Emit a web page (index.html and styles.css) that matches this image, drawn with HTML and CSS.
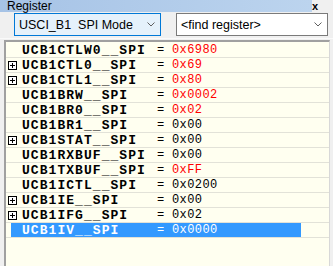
FILE: index.html
```html
<!DOCTYPE html>
<html lang="en">
<head>
<meta charset="UTF-8">
<meta name="viewport" content="width=device-width, initial-scale=1.0">
<title>Register</title>
<link rel="stylesheet" href="styles.css">
</head>
<body>

<div class="window">
  <div class="titlebar">
    <div class="title">Register</div>
    <div class="close">x</div>
  </div>

  <div class="toolbar">
    <div class="combo active">
      <span>USCI_B1&nbsp; SPI Mode</span>
      <svg class="chevron" width="8" height="5" viewBox="0 0 8 5"><path d="M0.5 0.5 L4 4 L7.5 0.5" fill="none" stroke="#5f5f5f" stroke-width="1"/></svg>
    </div>
    <div class="combo">
      <span>&lt;find register&gt;</span>
      <svg class="chevron" width="8" height="5" viewBox="0 0 8 5"><path d="M0.5 0.5 L4 4 L7.5 0.5" fill="none" stroke="#5f5f5f" stroke-width="1"/></svg>
    </div>
  </div>

  <div class="list">
    <div class="row"><span class="exp"></span><span class="name">UCB1CTLW0__SPI</span><span class="eq">=</span><span class="val changed">0x6980</span></div>
    <div class="row"><span class="exp"><i class="box"></i></span><span class="name">UCB1CTL0__SPI</span><span class="eq">=</span><span class="val changed">0x69</span></div>
    <div class="row"><span class="exp"><i class="box"></i></span><span class="name">UCB1CTL1__SPI</span><span class="eq">=</span><span class="val changed">0x80</span></div>
    <div class="row"><span class="exp"></span><span class="name">UCB1BRW__SPI</span><span class="eq">=</span><span class="val changed">0x0002</span></div>
    <div class="row"><span class="exp"></span><span class="name">UCB1BR0__SPI</span><span class="eq">=</span><span class="val changed">0x02</span></div>
    <div class="row"><span class="exp"></span><span class="name">UCB1BR1__SPI</span><span class="eq">=</span><span class="val">0x00</span></div>
    <div class="row"><span class="exp"><i class="box"></i></span><span class="name">UCB1STAT__SPI</span><span class="eq">=</span><span class="val">0x00</span></div>
    <div class="row"><span class="exp"></span><span class="name">UCB1RXBUF__SPI</span><span class="eq">=</span><span class="val">0x00</span></div>
    <div class="row"><span class="exp"></span><span class="name">UCB1TXBUF__SPI</span><span class="eq">=</span><span class="val changed">0xFF</span></div>
    <div class="row"><span class="exp"></span><span class="name">UCB1ICTL__SPI</span><span class="eq">=</span><span class="val">0x0200</span></div>
    <div class="row"><span class="exp"><i class="box"></i></span><span class="name">UCB1IE__SPI</span><span class="eq">=</span><span class="val">0x00</span></div>
    <div class="row"><span class="exp"><i class="box"></i></span><span class="name">UCB1IFG__SPI</span><span class="eq">=</span><span class="val">0x02</span></div>
    <div class="row selected"><span class="exp"></span><span class="name">UCB1IV__SPI</span><span class="eq">=</span><span class="val">0x0000</span></div>
  </div>
</div>

</body>
</html>
```

FILE: styles.css
```css
body {
  margin: 0;
  font-family: "Liberation Sans", Arial, sans-serif;
  background-color: #f0f0f0;
}

.window {
  width: 333px;
  height: 266px;
  display: flex;
  flex-direction: column;
  overflow: hidden;
  background-color: #f0f0f0;
}

.titlebar {
  height: 12px;
  display: flex;
  align-items: center;
  background: linear-gradient(to right, #a6c3e6, #bcd4ee 312px, #f0f0f0 312px);
}

.title {
  flex: 1;
  padding-left: 7px;
  font-size: 12px;
  line-height: 12px;
  color: #000;
}

.close {
  width: 21px;
  font-size: 11px;
  font-weight: bold;
  line-height: 12px;
  color: #000;
}

.toolbar {
  height: 25px;
  display: flex;
  align-items: flex-start;
  padding-top: 1px;
  padding-left: 14px;
  gap: 15px;
  border-bottom: 1px solid #fafafa;
}

.combo {
  height: 21px;
  display: flex;
  align-items: center;
  justify-content: space-between;
  padding: 0 5px 0 4px;
  border: 1px solid #7a7a7a;
  background-color: #fff;
  font-size: 12.5px;
  color: #000;
  width: 141px;
}

.combo.active {
  width: 136px;
  border-color: #0078d7;
  background-color: #e5f1fb;
}

.list {
  flex: 1;
  margin-left: 4px;
  margin-right: 3px;
  margin-top: 1px;
  border-top: 2px solid #a0a0a0;
  border-left: 2px solid #a0a0a0;
  border-right: 1px solid #d8d8d8;
  background-color: #fffff0;
  padding-top: 1px;
}

.row {
  height: 14px;
  display: flex;
  align-items: center;
  border-bottom: 1px solid #e2e2d8;
}

.exp {
  width: 16px;
  display: flex;
  align-items: center;
  padding-left: 2px;
  box-sizing: border-box;
}

.box {
  position: relative;
  width: 9px;
  height: 9px;
  box-sizing: border-box;
  border: 1px solid #000;
  background-color: #fff;
}

.box::before,
.box::after {
  content: "";
  position: absolute;
  background-color: #000;
}

.box::before {
  left: 1px;
  top: 3px;
  width: 5px;
  height: 1px;
}

.box::after {
  left: 3px;
  top: 1px;
  width: 1px;
  height: 5px;
}

.name {
  width: 135px;
  font-family: "Liberation Mono", "Courier New", monospace;
  font-weight: bold;
  font-size: 13px;
  letter-spacing: 1.05px;
  color: #000;
}

.eq {
  width: 15px;
  font-family: "Liberation Mono", "Courier New", monospace;
  font-size: 12px;
  color: #000;
}

.val {
  font-family: "Liberation Mono", "Courier New", monospace;
  font-size: 12px;
  letter-spacing: 0.4px;
  color: #000;
}

.val.changed {
  color: #f00;
}

.selected {
  background: linear-gradient(to right, transparent 5px, #3399ff 5px, #3399ff 295px, transparent 295px);
}

.selected .name,
.selected .eq,
.selected .val {
  color: #fff;
}
```
